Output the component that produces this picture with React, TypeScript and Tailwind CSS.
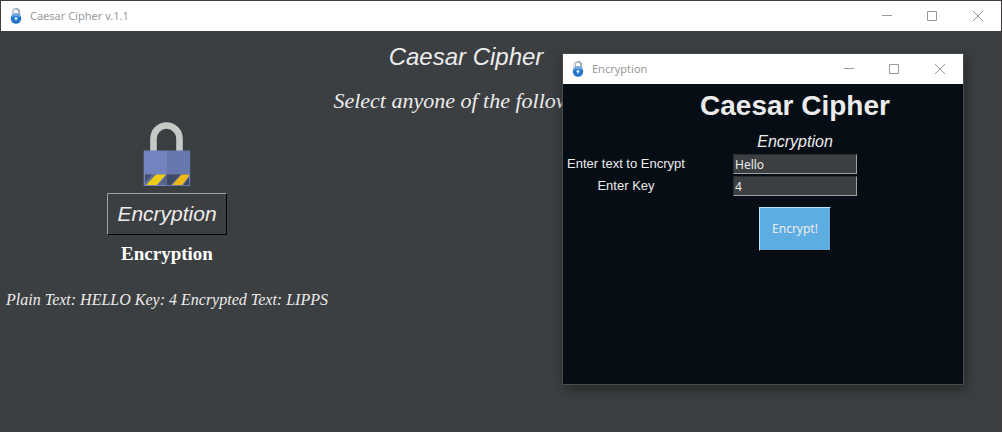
import { useState, type ReactNode } from "react";

function KeyholeIcon() {
  return (
    <svg width="12" height="16" viewBox="0 0 12 16" aria-hidden="true">
      <path d="M2.8 8V4a3.2 3.2 0 0 1 6.4 0V8" fill="none" stroke="#9dabb8" strokeWidth="2" />
      <path d="M2.4 7V4a3.3 3.3 0 0 1 3.2-3.2" fill="none" stroke="#dbe4ec" strokeWidth="1" />
      <circle cx="6" cy="10.5" r="5.2" fill="#2272c8" />
      <path d="M1.4 9.3a4.8 4.8 0 0 1 9.2 0Q6 7.2 1.4 9.3Z" fill="#6fa8df" />
      <circle cx="6" cy="10.5" r="1.5" fill="#d8efff" />
      <path d="M5.5 11h1l.3 2H5.2Z" fill="#5fb0f2" />
    </svg>
  );
}

function PadlockPicture() {
  return (
    <svg width="48" height="64" viewBox="0 0 48 64" role="img" aria-label="Padlock">
      <path d="M10.5 30V16.5a13 13 0 0 1 26 0V30" fill="none" stroke="#c6c9c6" strokeWidth="6.6" />
      <path d="M.7 28.5h23.3V64H.7Z" fill="#7383bf" />
      <path d="M24 28.5h23.2V64H24Z" fill="#6877ae" />
      <path d="M2 52.5h22V63H2Z" fill="#59648b" />
      <path d="M24 52.5h22V63H24Z" fill="#404963" />
      <path d="M2 52.5h7L2 60Z" fill="#454f70" />
      <path d="M13 52.5h10.5L14 63H3Z" fill="#efcf16" />
      <path d="M38.5 52.5h7.5v2L40 63H29Z" fill="#efb814" />
      <path d="M11.5 52.5 2 62M23.5 52.5 14.5 63M38 52.5 28.5 63M46 54.5 39.5 63" fill="none" stroke="#6f7eb8" strokeWidth="1" />
    </svg>
  );
}

function TitleBar({ title }: { title: string }) {
  return (
    <header className="flex h-[30px] items-center bg-white pl-[9px] font-['Noto_Sans',sans-serif] text-[#999999]">
      <KeyholeIcon />
      <span className="ml-2 text-[11px] leading-4">{title}</span>
      <div className="ml-auto flex h-full">
        <button type="button" aria-label="Minimize" className="flex w-[44px] items-center justify-center">
          <svg width="10" height="10" viewBox="0 0 10 10" fill="none" stroke="currentColor">
            <path d="M0 4.5h10" />
          </svg>
        </button>
        <button type="button" aria-label="Maximize" className="flex w-[46px] items-center justify-center">
          <svg width="10" height="10" viewBox="0 0 10 10" fill="none" stroke="currentColor">
            <path d="M.5 .5h9v9h-9Z" />
          </svg>
        </button>
        <button type="button" aria-label="Close" className="flex w-[46px] items-center justify-center">
          <svg width="10" height="10" viewBox="0 0 10 10" fill="none" stroke="currentColor">
            <path d="M0 0l10 10M10 0 0 10" />
          </svg>
        </button>
      </div>
    </header>
  );
}

function Field({ id, label, children }: { id: string; label: string; children: ReactNode }) {
  return (
    <>
      <label htmlFor={id} className="text-center text-[13px] leading-4">
        {label}
      </label>
      {children}
    </>
  );
}

const inputClass =
  "h-5 w-[124px] justify-self-center border border-t-[#292c2e] border-l-[#292c2e] border-r-[#a0a0a0] border-b-[#a0a0a0] bg-[#3c3f41] px-px font-['Noto_Sans',sans-serif] text-[12px] leading-4 text-[#ececec] outline-none";

function EncryptionWindow() {
  const [text, setText] = useState("Hello");
  const [key, setKey] = useState("4");
  return (
    <section className="absolute top-[52px] left-[561px] flex h-[332px] w-[402px] flex-col border border-[#4a4c4c] bg-[#060d14] font-['Liberation_Sans',sans-serif] text-[#ececec] shadow-[2px_4px_12px_rgba(0,0,0,0.4)]">
      <TitleBar title="Encryption" />
      <form className="grid grid-cols-[126px_212px] items-center gap-y-0.5" onSubmit={(e) => e.preventDefault()}>
        <h2 className="col-start-2 justify-self-center pt-1 text-[28px] leading-9 font-bold whitespace-nowrap">Caesar Cipher</h2>
        <p className="col-start-2 pt-1.5 text-center text-[16px] leading-5 italic">Encryption</p>
        <Field id="plain" label="Enter text to Encrypt">
          <input id="plain" className={inputClass} value={text} onChange={(e) => setText(e.target.value)} />
        </Field>
        <Field id="key" label="Enter Key">
          <input id="key" className={inputClass} value={key} onChange={(e) => setKey(e.target.value)} />
        </Field>
        <button
          type="submit"
          className="col-start-2 mt-[9px] h-11 w-[72px] justify-self-center border border-t-[#b9e4ff] border-l-[#b9e4ff] border-r-black border-b-black bg-[#5dade2] font-['Noto_Sans',sans-serif] text-[12px] leading-4"
        >
          Encrypt!
        </button>
      </form>
    </section>
  );
}

export default function App() {
  return (
    <div className="relative flex min-h-screen flex-col border border-[#403c3e] bg-[#3c3f41] text-[#ececec]">
      <TitleBar title="Caesar Cipher v.1.1" />
      <main className="grid grid-cols-[332px_266px] font-['Liberation_Serif',serif]">
        <h1 className="col-start-2 pt-3 text-center font-['Liberation_Sans',sans-serif] text-[24px] leading-7 italic">Caesar Cipher</h1>
        <p className="col-start-2 pt-4 text-center text-[22px] leading-7 whitespace-nowrap italic">Select anyone of the following</p>
        <div className="col-start-1 flex flex-col items-center pt-[7px]">
          <PadlockPicture />
          <button
            type="button"
            className="mt-[7px] h-[42px] w-[120px] border border-t-[#a0a0a0] border-l-[#a0a0a0] border-r-black border-b-black font-['Liberation_Sans',sans-serif] text-[21px] leading-6 italic"
          >
            Encryption
          </button>
          <h2 className="mt-[7px] text-[19px] leading-6 font-bold text-white">Encryption</h2>
        </div>
        <p className="col-start-1 mt-6 text-center text-[16px] leading-5 whitespace-nowrap italic">
          Plain Text: HELLO Key: 4 Encrypted Text: LIPPS
        </p>
      </main>
      <EncryptionWindow />
    </div>
  );
}
